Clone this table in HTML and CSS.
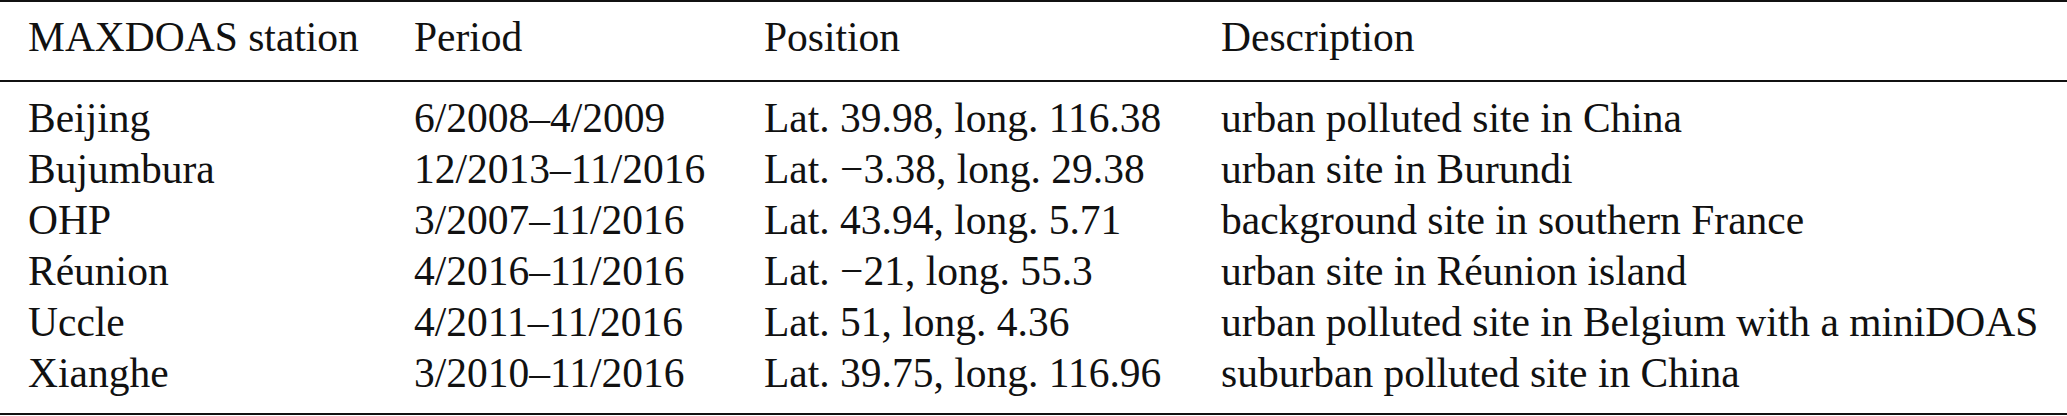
FILE: index.html
```html
<!DOCTYPE html>
<html lang="en">
<head>
    <meta charset="UTF-8">
    <title>MAXDOAS stations</title>
    <link rel="stylesheet" href="styles.css">
</head>
<body>
    <table class="stations">
        <colgroup>
            <col class="col-station">
            <col class="col-period">
            <col class="col-position">
            <col class="col-desc">
        </colgroup>
        <thead>
            <tr>
                <th>MAXDOAS station</th>
                <th>Period</th>
                <th>Position</th>
                <th>Description</th>
            </tr>
        </thead>
        <tbody>
            <tr>
                <td>Beijing</td>
                <td>6/2008–4/2009</td>
                <td>Lat. 39.98, long. 116.38</td>
                <td>urban polluted site in China</td>
            </tr>
            <tr>
                <td>Bujumbura</td>
                <td>12/2013–11/2016</td>
                <td>Lat. &minus;3.38, long. 29.38</td>
                <td>urban site in Burundi</td>
            </tr>
            <tr>
                <td>OHP</td>
                <td>3/2007–11/2016</td>
                <td>Lat. 43.94, long. 5.71</td>
                <td>background site in southern France</td>
            </tr>
            <tr>
                <td>Réunion</td>
                <td>4/2016–11/2016</td>
                <td>Lat. &minus;21, long. 55.3</td>
                <td>urban site in Réunion island</td>
            </tr>
            <tr>
                <td>Uccle</td>
                <td>4/2011–11/2016</td>
                <td>Lat. 51, long. 4.36</td>
                <td>urban polluted site in Belgium with a miniDOAS</td>
            </tr>
            <tr>
                <td>Xianghe</td>
                <td>3/2010–11/2016</td>
                <td>Lat. 39.75, long. 116.96</td>
                <td>suburban polluted site in China</td>
            </tr>
        </tbody>
    </table>
</body>
</html>
```

FILE: styles.css
```css
body {
    margin: 0;
    background: white;
    color: #111;
    font-family: "Liberation Serif", "Times New Roman", serif;
}
.stations {
    width: 2067px;
    border-collapse: collapse;
    table-layout: fixed;
    font-size: 41.5px;
    line-height: 51px;
    border-top: 2px solid #111;
    border-bottom: 2px solid #111;
}
.col-station { width: 414px; }
.col-period { width: 350px; }
.col-position { width: 457px; }
.stations th,
.stations td {
    padding: 0;
    text-align: left;
    font-weight: normal;
    white-space: nowrap;
    vertical-align: top;
}
.stations th:first-child,
.stations td:first-child {
    padding-left: 28px;
}
.stations thead th {
    padding-top: 10px;
    padding-bottom: 17px;
    border-bottom: 2px solid #111;
}
.stations tbody tr:first-child td {
    padding-top: 11px;
}
.stations tbody tr:last-child td {
    padding-bottom: 14px;
}
```
